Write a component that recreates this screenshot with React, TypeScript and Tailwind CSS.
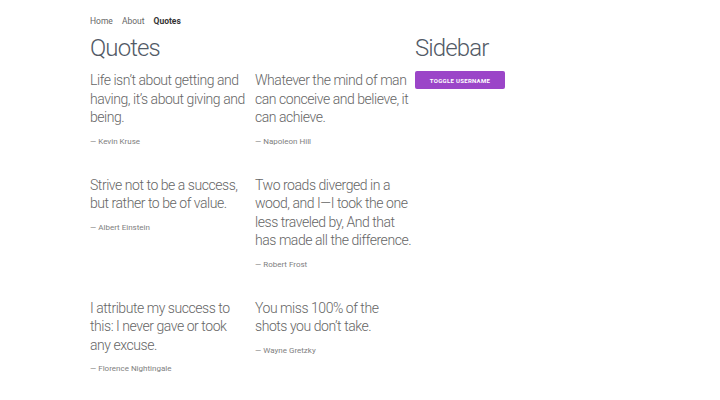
const quotes = [
  { text: "Life isn’t about getting and having, it’s about giving and being.", author: "Kevin Kruse" },
  { text: "Whatever the mind of man can conceive and believe, it can achieve.", author: "Napoleon Hill" },
  { text: "Strive not to be a success, but rather to be of value.", author: "Albert Einstein" },
  { text: "Two roads diverged in a wood, and I—I took the one less traveled by, And that has made all the difference.", author: "Robert Frost" },
  { text: "I attribute my success to this: I never gave or took any excuse.", author: "Florence Nightingale" },
  { text: "You miss 100% of the shots you don’t take.", author: "Wayne Gretzky" },
];

const App = () => {
  return (
    <div className="min-h-[400px] w-[720px] bg-white pl-[90px] pt-[15px] font-['Roboto',sans-serif] text-[#555]">
      <nav className="flex gap-[9px] text-[8.5px] leading-[12px] text-[#666]">
        <a>Home</a>
        <a>About</a>
        <a className="font-bold text-[#333]">Quotes</a>
      </nav>
      <div className="flex">
        <main className="w-[325px]">
          <h1 className="mt-[6px] text-[24px] font-light leading-[30px] tracking-[-0.9px] text-[#525a66]">Quotes</h1>
          <div className="mt-[8px] grid grid-cols-[157px_157px] gap-x-[8px]">
            {quotes.map((q) => (
              <figure key={q.author} className="pb-[28px]">
                <blockquote className="text-[14px] font-light leading-[18.5px] tracking-[-0.45px] text-[#666]">
                  {q.text}
                </blockquote>
                <figcaption className="mt-[9px] text-[8px] leading-[12px] text-[#808080]">
                  — {q.author}
                </figcaption>
              </figure>
            ))}
          </div>
        </main>
        <aside>
          <h2 className="mt-[6px] text-[24px] font-light leading-[30px] tracking-[-0.9px] text-[#525a66]">Sidebar</h2>
          <button className="mt-[8px] h-[18px] w-[90px] rounded-[2px] bg-[#9b45c8] text-[6px] font-bold uppercase tracking-[0.3px] text-white">
            Toggle Username
          </button>
        </aside>
      </div>
    </div>
  );
};

export default App;
